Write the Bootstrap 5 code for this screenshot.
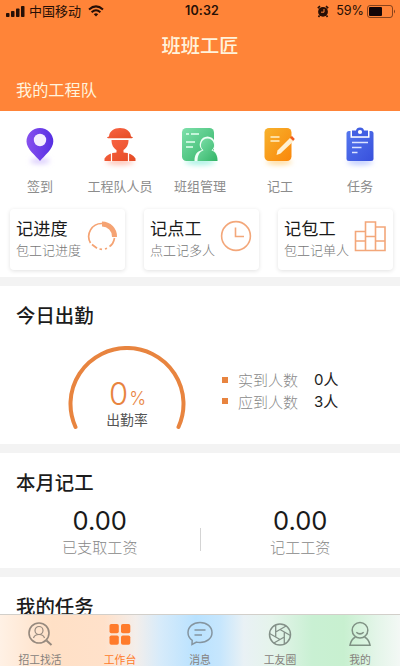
<!DOCTYPE html>
<html lang="zh-CN">
<head>
<meta charset="utf-8">
<meta name="viewport" content="width=device-width, initial-scale=1">
<title>班班工匠</title>
<link href="https://cdn.jsdelivr.net/npm/bootstrap@5.3.0/dist/css/bootstrap.min.css" rel="stylesheet">
<style>
body{font-family:"Noto Sans CJK SC",sans-serif;width:400px;height:666px;overflow:hidden;background:#f3f3f3;color:#1c1c1c}
svg{display:block;flex:none}
.top{background:#ff8438;height:111px;color:#fff3dc}
.status{height:22px;color:#260f06;padding:0 4px 0 6px;font-size:13px;line-height:22px}
.latin{font-family:Inter,"Noto Sans CJK SC",sans-serif}
.carrier{margin-left:4px;margin-right:7px}
.battery-text{font-size:12.6px;margin:0 3px 0 7px}
.clock{font-weight:600;font-size:12.5px;letter-spacing:.1px;padding-left:4px}
.page-title{height:46px;line-height:46px;font-size:19.3px;font-weight:500}
.team{font-size:16.2px;line-height:24px;padding:9px 16px 0}
.quick{height:166px}
.menu-grid{height:98px;padding-top:13px}
.menu-grid>div{width:80.4px;font-size:13px;line-height:20px;color:#8c8c8c}
.menu-grid svg{margin-bottom:6px}
.tiles{gap:19px;padding-left:10px}
.tile{width:115px;height:61px;border-radius:4px;box-shadow:0 1px 4px #0000001f;padding:7px 5px 0 6px}
.tile b{font-weight:400;font-size:17.2px;line-height:24px;display:block;color:#1a1a1a}
.tile span{font-size:13px;font-weight:300;line-height:20px;color:#777;display:block;white-space:nowrap}
.tile svg{margin:4px 2px 0 -12px}
h2{font-size:19.4px;font-weight:500;line-height:28px;margin:0;padding:15px 16px 0}
.attend{height:158px;margin-top:9px}
.gauge{width:118px;height:90px;margin-left:68px;margin-top:5px}
.gauge-text{left:0;right:0;top:32px}
.pct{font-family:Inter,sans-serif;color:#e8843f;font-size:31px;font-weight:300;line-height:32px;height:32px;padding-left:1px}
.pct small{font-size:18px;line-height:1;margin-left:1px}
.rate{font-size:13.8px;line-height:18px;color:#555}
.legend{margin:28px 0 0 36px;font-size:15px;line-height:21.5px}
.legend i{width:6px;height:6px;background:#e8843f;margin-right:10px}
.legend span{color:#8a8a8a;width:76px;font-weight:300}
.wages{height:115px;margin-top:9px}
.wages .pay{width:200px;color:#888;font-size:15.1px;font-weight:300;line-height:21px;padding-top:1px}
.pay strong{font-family:Inter,sans-serif;font-weight:400;font-size:25.5px;line-height:31px;color:#1a1a1a;display:block}
.divider{width:1px;height:23px;background:#d4d4d4;margin-top:24px}
.tasks{height:37px;margin-top:9px;overflow:hidden}
.tabs{height:52px;border-top:1px solid #d2cfca;background:linear-gradient(90deg,#fff1e5 0,#ffe0c6 13%,#ffe1ca 26%,#f3eeeb 34%,#d7ebfa 40%,#b9e2ff 49%,#c6e6fd 55%,#e9f1f5 61%,#e5f4eb 68%,#c9f0d3 78%,#c8f0d0 86%,#e3f5e8 94%,#f3f8f5 100%)}
.tabs>div{width:80.4px;font-size:10.8px;line-height:14px;color:#85817c;padding-top:6px}
.tabs svg{margin-bottom:6px}
.tabs .on{color:#ff7b2b}
</style>
</head>
<body>
<header class="top">
  <div class="status d-flex align-items-center position-relative">
    <svg width="19" height="12" fill="currentColor"><rect x="0" y="8" width="3.5" height="4" rx=".8"/><rect x="5" y="6" width="3.5" height="6" rx=".8"/><rect x="10" y="3.5" width="3.5" height="8.5" rx=".8"/><rect x="15" y="1" width="3.5" height="11" rx=".8"/></svg>
    <span class="carrier">中国移动</span>
    <svg width="16" height="12" viewBox="0 0 16 12" fill="none" stroke="currentColor" stroke-width="2"><path d="M1 4.5Q8-1.8 15 4.5M3.6 7.2Q8 3.2 12.4 7.2"/><path d="M5.8 9.2Q8 7.2 10.2 9.2L8 11.6Z" fill="currentColor" stroke="none"/></svg>
    <div class="clock latin position-absolute start-0 end-0 text-center">10:32</div>
    <svg class="ms-auto" width="12" height="13" viewBox="0 0 12 13"><circle cx="6" cy="6.8" r="4.9" fill="currentColor"/><path d="M.8 3.2 3 1.2M11.2 3.2 9 1.2M2.5 10.5 1.5 12M9.5 10.5l1 1.5" stroke="currentColor" stroke-width="1.6"/><path d="M7 4v3.2H4" fill="none" stroke="#ff8438" stroke-width="1"/></svg>
    <span class="latin battery-text">59%</span>
    <svg width="29" height="13" viewBox="0 0 29 13"><rect x=".5" y=".5" width="25" height="12" rx="2.5" fill="none" stroke="currentColor" stroke-opacity=".55"/><rect x="2" y="2" width="13" height="9" rx="1" fill="#130608"/><path d="M27 4.5q2 2 0 4z" fill="currentColor" opacity=".6"/></svg>
  </div>
  <div class="page-title text-center">班班工匠</div>
  <div class="team">我的工程队</div>
</header>

<section class="quick bg-white">
  <div class="menu-grid d-flex">
    <div class="d-flex flex-column align-items-center">
      <svg width="46" height="46" viewBox="0 0 46 46"><defs><linearGradient id="pin"><stop stop-color="#8750ee"/><stop offset="1" stop-color="#562fe3"/></linearGradient><filter id="soft" x="-50%" y="-150%" width="200%" height="400%"><feGaussianBlur stdDeviation="2.4"/></filter></defs><ellipse cx="23" cy="37" rx="10" ry="3" fill="#dccffd" filter="url(#soft)"/><path d="M23 37C19 32 9.500 25 9.500 17.500a13.300 13.300 0 0 1 26.800 0C36.300 25 27 32 23 37Z" fill="url(#pin)"/><circle cx="23" cy="16" r="6.200" fill="#f4eeff"/></svg>签到
    </div>
    <div class="d-flex flex-column align-items-center">
      <svg width="46" height="46" viewBox="0 0 46 46"><defs><linearGradient id="red" x2="1" y2="1"><stop stop-color="#fa6545"/><stop offset="1" stop-color="#e44b24"/></linearGradient></defs><ellipse cx="23" cy="38" rx="14" ry="3" fill="#ffc3b5" filter="url(#soft)"/><g fill="url(#red)"><path d="M12 12.500c-2.500.3-2.500 1.800 0 1.800h22c2.500 0 2.500-1.500 0-1.800C33.500 7 29 4 23 4s-10.500 3-11 8.500Z"/><path d="M14.500 16h17c0 5-2 8-5 10v2.500q8.500.5 12 6v2.500h-31v-2.500q3.500-5.500 12-6V26c-3-2-5-5-5-10Z"/></g><path d="M14.500 28v9.500M31.500 28v9.500" stroke="#fff" stroke-width="1.200"/></svg>工程队人员
    </div>
    <div class="d-flex flex-column align-items-center">
      <svg width="46" height="46" viewBox="0 0 46 46"><defs><linearGradient id="green" x2="1" y2="1"><stop stop-color="#7ee0ab"/><stop offset="1" stop-color="#32b466"/></linearGradient></defs><ellipse cx="23" cy="38" rx="15" ry="3" fill="#a7f2e3" filter="url(#soft)"/><rect x="5" y="4" width="32" height="33" rx="4.500" fill="url(#green)"/><path d="M9 10h3M14 10h8M9 18h9M9 23h7" stroke="#e4fff0" stroke-width="1.400"/><path d="M30.500 12.500a8 8 0 0 1 5.500 13.500c3.500 1.500 5 5 5 11H17.500c0-6 2-9.500 7.500-11a8 8 0 0 1 5.500-13.500Z" fill="#effff6"/><path d="M30.500 14.500a6.600 6.600 0 0 1 4 11.800c4 1.800 6 4.700 6 10.700H20.500c0-6 2-9 6-10.700a6.600 6.600 0 0 1 4-11.800Z" fill="url(#green)"/></svg>班组管理
    </div>
    <div class="d-flex flex-column align-items-center">
      <svg width="46" height="46" viewBox="0 0 46 46"><defs><linearGradient id="amber" x2="1" y2="1"><stop stop-color="#f7b22d"/><stop offset="1" stop-color="#fa870a"/></linearGradient></defs><ellipse cx="22" cy="38" rx="13" ry="3" fill="#ffdc9d" filter="url(#soft)"/><rect x="7.500" y="4" width="27" height="33" rx="4.500" fill="url(#amber)"/><path d="M13.500 13h9M13.500 17h9" stroke="#fff1ca" stroke-width="1.400"/><path d="m19.500 31 1-4.500L33 14l3.500 3.300L23.500 29.600Z" fill="#fff0d1"/><path d="m33 13.500 2-1.500 2.800 3-1.700 2Z" fill="#f15b20"/></svg>记工
    </div>
    <div class="d-flex flex-column align-items-center">
      <svg width="46" height="46" viewBox="0 0 46 46"><defs><linearGradient id="blue" x2="1" y2="1"><stop stop-color="#5476ee"/><stop offset="1" stop-color="#3850dc"/></linearGradient></defs><ellipse cx="23" cy="38" rx="13" ry="3" fill="#c0ccff" filter="url(#soft)"/><path d="M12 7h22q2.500 0 2.500 2.500v25q0 2.500-2.500 2.500H12q-2.500 0-2.500-2.500v-25Q9.500 7 12 7Z" fill="url(#blue)"/><path d="M13.500 7h19v6.800h-19Z" fill="#fff"/><path d="M15 6.500h4Q19.500 3.400 23 3.400t4 3.100h4v5.800H15Z" fill="#425fe3"/><circle cx="23" cy="8" r="2.100" fill="#fff"/><path d="M15 18.500h16M15 23.500h9.500M15 28.500h5.500" stroke="#dce4ff" stroke-width="1.500"/></svg>任务
    </div>
  </div>
  <div class="tiles d-flex">
    <div class="tile d-flex justify-content-between bg-white">
      <div><b>记进度</b><span>包工记进度</span></div>
      <svg width="32" height="32" viewBox="0 0 32 32" fill="none" stroke="#f5a373"><path d="M16 3.500A13 13 0 0 0 4.500 23" stroke-width="1.700"/><path d="M16 4a12.500 12.500 0 0 1 12.500 13" stroke-width="5"/><path d="M28.500 18q-1 6-5 8.500M6 24.500l5 3.700M13.500 29l2.500.4M19 29l2-.7" stroke-width="1.700"/></svg>
    </div>
    <div class="tile d-flex justify-content-between bg-white">
      <div><b>记点工</b><span>点工记多人</span></div>
      <svg width="32" height="32" viewBox="0 0 32 32" fill="none" stroke="#f3a77a" stroke-width="1.600"><circle cx="16" cy="16" r="14.400"/><path d="M15.500 7.500v9H24"/></svg>
    </div>
    <div class="tile d-flex justify-content-between bg-white">
      <div><b>记包工</b><span>包工记单人</span></div>
      <svg width="32" height="32" viewBox="0 0 32 32" fill="none" stroke="#f3a77a" stroke-width="1.600"><path d="M1.500 11.500h10v19h-10ZM11.500 2h10v28.500h-10ZM21.500 7h9.500v23.500h-9.500ZM1.500 21h10M11.500 16.500h10M21.500 21H31"/></svg>
    </div>
  </div>
</section>

<section class="attend bg-white">
  <h2>今日出勤</h2>
  <div class="d-flex align-items-start pt-2 mt-1">
    <div class="gauge position-relative">
      <svg width="118" height="90" viewBox="0 0 118 90"><path d="M7.500 81A56.500 56 0 1 1 110.500 81" fill="none" stroke="#e8843f" stroke-width="4" stroke-linecap="round"/></svg>
      <div class="gauge-text position-absolute text-center"><div class="pct">0<small>%</small></div><div class="rate">出勤率</div></div>
    </div>
    <div class="legend">
      <div class="d-flex align-items-center"><i></i><span>实到人数</span><div class="latin">0人</div></div>
      <div class="d-flex align-items-center"><i></i><span>应到人数</span><div class="latin">3人</div></div>
    </div>
  </div>
</section>

<section class="wages bg-white">
  <h2>本月记工</h2>
  <div class="d-flex text-center pt-2">
    <div class="pay"><strong>0.00</strong>已支取工资</div>
    <div class="divider"></div>
    <div class="pay"><strong>0.00</strong>记工工资</div>
  </div>
</section>

<section class="tasks bg-white"><h2>我的任务</h2></section>

<nav class="tabs d-flex">
  <div class="d-flex flex-column align-items-center">
    <svg width="26" height="25" viewBox="0 0 26 25" fill="none" stroke="#96897e" stroke-width="1.600"><circle cx="12" cy="12" r="10"/><path d="m19.500 19.500 5 4.500" stroke-width="2"/><circle cx="12" cy="9.500" r="4" stroke-width="1.200"/><path d="M6.500 17q1-3.500 5.500-3.500t5.500 3.500" stroke-width="1.200"/></svg>招工找活
  </div>
  <div class="on d-flex flex-column align-items-center">
    <svg width="26" height="25" viewBox="0 0 26 25" fill="#ff7b2b"><rect x="2.500" y="3" width="9.300" height="9.300" rx="1.800"/><rect x="14" y="3" width="9.300" height="9.300" rx="1.800"/><rect x="2.500" y="14.500" width="9.300" height="9.300" rx="1.800"/><rect x="14" y="14.500" width="9.300" height="9.300" rx="1.800"/></svg>工作台
  </div>
  <div class="d-flex flex-column align-items-center">
    <svg width="28" height="25" viewBox="0 0 28 25" fill="none" stroke="#8595a0" stroke-width="1.500"><path d="M14 1.500c7 0 12 4.200 12 10s-5 10-12 10q-2 0-3.500-.4L6 23.500l.2-4.200Q2 16.500 2 11.500c0-5.800 5-10 12-10ZM8.500 9h11M8.500 14H16"/></svg>消息
  </div>
  <div class="d-flex flex-column align-items-center">
    <svg width="26" height="25" viewBox="0 0 26 25" fill="none" stroke="#839088" stroke-width="1.300"><circle cx="13" cy="13.500" r="10.500" stroke-width="1.500"/><path d="M13 8.500 23.400 14.500M17.300 11V23M17.300 16 6.900 22M13 18.500 2.600 12.500M8.700 16V4M8.700 11 19.100 5"/></svg>工友圈
  </div>
  <div class="d-flex flex-column align-items-center">
    <svg width="26" height="25" viewBox="0 0 26 25" fill="none" stroke="#7f9184" stroke-width="1.500"><circle cx="13" cy="9.300" r="7.800"/><path d="M9.300 11.200q3.700 3.400 7.400 0M8.500 16Q4 18.500 3 24.200h20Q22 18.500 17.500 16"/></svg>我的
  </div>
</nav>
<script src="https://cdn.jsdelivr.net/npm/bootstrap@5.3.0/dist/js/bootstrap.bundle.min.js"></script>
</body>
</html>
